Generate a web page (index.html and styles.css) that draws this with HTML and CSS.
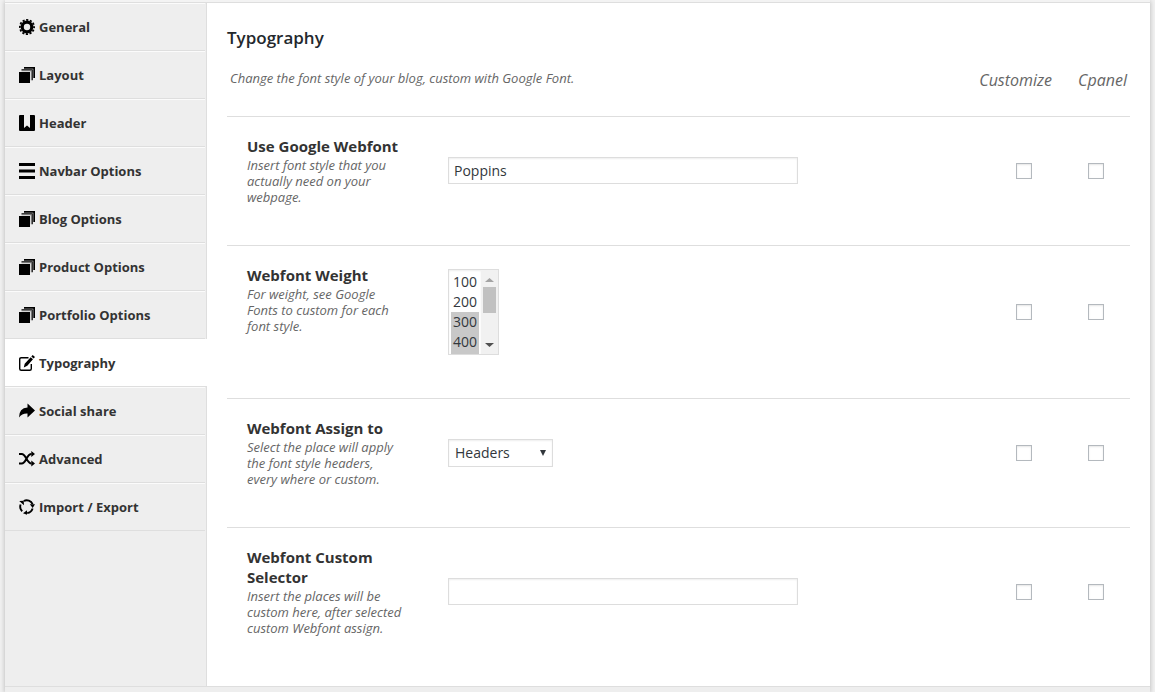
FILE: index.html
```
<!DOCTYPE html>
<html lang="en">
<head>
    <meta charset="UTF-8">
    <meta name="viewport" content="width=device-width, initial-scale=1.0">
    <title>Theme Options - Typography</title>
    <link rel="stylesheet" href="styles.css">
</head>
<body>

    <!-- Shared icon shapes -->
    <svg class="sprite" aria-hidden="true">
        <symbol id="icon-layers" viewBox="0 0 16 16">
            <path d="M5 0h11v11h-1.700V1.700H5z"/>
            <path d="M2.500 2.200h11.300v11h-1V3.300H2.500z"/>
            <path d="M2.500 3.300h10.300v10h-1V4.300H2.500z" opacity=".45"/>
            <path d="M0 5h11v11H0z"/>
        </symbol>
    </svg>

    <form class="panel" action="#">
        <div class="topbar"></div>

        <div class="container">
            <nav class="sidebar">
                <ul>
                    <li><a href="#general">
                        <svg class="icon" viewBox="0 0 16 16"><circle cx="8" cy="8" r="4.800" fill="none" stroke="#000" stroke-width="3.200"/><circle cx="8" cy="8" r="7.100" fill="none" stroke="#000" stroke-width="1.800" stroke-dasharray="2.200 1.518" stroke-dashoffset="1.100"/></svg>
                        General</a></li>
                    <li><a href="#layout"><svg class="icon"><use href="#icon-layers"/></svg> Layout</a></li>
                    <li><a href="#header">
                        <svg class="icon" viewBox="0 0 16 16"><path d="M1 0h4v13l3-2.500 3 2.500V0h4q1 0 1 1v14q0 1-1 1H1q-1 0-1-1V1q0-1 1-1z"/></svg>
                        Header</a></li>
                    <li><a href="#navbar">
                        <svg class="icon" viewBox="0 0 16 16"><path d="M0 0h16v3H0zM0 6.500h16v3H0zM0 13h16v3H0z"/></svg>
                        Navbar Options</a></li>
                    <li><a href="#blog"><svg class="icon"><use href="#icon-layers"/></svg> Blog Options</a></li>
                    <li><a href="#product"><svg class="icon"><use href="#icon-layers"/></svg> Product Options</a></li>
                    <li><a href="#portfolio"><svg class="icon"><use href="#icon-layers"/></svg> Portfolio Options</a></li>
                    <li class="active"><a href="#typography">
                        <svg class="icon" viewBox="0 0 16 16"><path d="M9.500 2.700H2.200Q.7 2.700.7 4.200v9.500q0 1.500 1.500 1.500h8.600q1.500 0 1.500-1.500V9" fill="none" stroke="#000" stroke-width="1.400"/><path d="M13.700 0 16 2l-1.400 1.600-2.300-2zM11.700 2.300l2.300 2-5.700 6.500-3.500 1.600.9-3.600z"/></svg>
                        Typography</a></li>
                    <li><a href="#social">
                        <svg class="icon" viewBox="0 0 16 16"><path d="M8.500.5 16 7.500l-7.500 7v-4Q3 10.200 0 14.500 0 5 8.500 4.500z"/></svg>
                        Social share</a></li>
                    <li><a href="#advanced">
                        <svg class="icon" viewBox="0 0 16 16"><path d="M0 3h2.700C7.200 3 7.500 12.500 12.500 12.500M0 12.500h2.700C7.200 12.500 7.500 3 12.500 3" fill="none" stroke="#000" stroke-width="2"/><path d="M12.300 0 16 3l-3.700 3zM12.300 9.500l3.700 3-3.700 3z"/></svg>
                        Advanced</a></li>
                    <li><a href="#import">
                        <svg class="icon" viewBox="0 0 16 16"><path d="M4.800 2A6.400 6.400 0 0 1 13.600 5.200M13.600 9.500A6.400 6.400 0 0 1 8.200 14M3.200 12.200A6.400 6.400 0 0 1 1.600 5.500" fill="none" stroke="#000" stroke-width="1.900"/><path d="M.2 2l4.500-.2.300 4.400zM10.800 5.200H16l-2.300 3.700zM8 11.200v4.600l-4-1.600z"/></svg>
                        Import / Export</a></li>
                </ul>
            </nav>

            <main class="main">
                <h1>Typography</h1>
                <div class="section-head">
                    <p class="section-desc">Change the font style of your blog, custom with Google Font.</p>
                    <span class="column-label">Customize</span>
                    <span class="column-label">Cpanel</span>
                </div>

                <div class="row">
                    <div class="field-info">
                        <label class="field-title" for="webfont">Use Google Webfont</label>
                        <p class="field-desc">Insert font style that you actually need on your webpage.</p>
                    </div>
                    <div class="field">
                        <input class="text" type="text" id="webfont" value="Poppins">
                    </div>
                    <div class="checks">
                        <input type="checkbox" aria-label="Use Google Webfont in Customize">
                        <input type="checkbox" aria-label="Use Google Webfont in Cpanel">
                    </div>
                </div>

                <div class="row">
                    <div class="field-info">
                        <label class="field-title" for="weight">Webfont Weight</label>
                        <p class="field-desc">For weight, see Google Fonts to custom for each font style.</p>
                    </div>
                    <div class="field">
                        <div class="listbox">
                            <select id="weight" multiple size="4">
                                <option>100</option>
                                <option>200</option>
                                <option selected>300</option>
                                <option selected>400</option>
                                <option selected>500</option>
                                <option>600</option>
                                <option>700</option>
                                <option>800</option>
                            </select>
                            <div class="scrollbar" aria-hidden="true">
                                <svg class="arrow" viewBox="0 0 17 17"><path d="M4 12l4.500-4 4.500 4z" fill="#a3a3a3"/></svg>
                                <div class="thumb"></div>
                                <svg class="arrow" viewBox="0 0 17 17"><path d="M4 6l4.500 4L13 6z" fill="#505050"/></svg>
                            </div>
                        </div>
                    </div>
                    <div class="checks">
                        <input type="checkbox" aria-label="Webfont Weight in Customize">
                        <input type="checkbox" aria-label="Webfont Weight in Cpanel">
                    </div>
                </div>

                <div class="row">
                    <div class="field-info">
                        <label class="field-title" for="assign">Webfont Assign to</label>
                        <p class="field-desc">Select the place will apply the font style headers, every where or custom.</p>
                    </div>
                    <div class="field">
                        <span class="dropdown">
                            <select id="assign">
                                <option>Headers</option>
                                <option>Every where</option>
                                <option>Custom</option>
                            </select>
                        </span>
                    </div>
                    <div class="checks">
                        <input type="checkbox" aria-label="Webfont Assign to in Customize">
                        <input type="checkbox" aria-label="Webfont Assign to in Cpanel">
                    </div>
                </div>

                <div class="row">
                    <div class="field-info">
                        <label class="field-title" for="selector">Webfont Custom Selector</label>
                        <p class="field-desc">Insert the places will be custom here, after selected custom Webfont assign.</p>
                    </div>
                    <div class="field">
                        <input class="text" type="text" id="selector">
                    </div>
                    <div class="checks">
                        <input type="checkbox" aria-label="Webfont Custom Selector in Customize">
                        <input type="checkbox" aria-label="Webfont Custom Selector in Cpanel">
                    </div>
                </div>
            </main>
        </div>

        <div class="bottombar"></div>
    </form>

</body>
</html>
```
FILE: styles.css
```
* {
    box-sizing: border-box;
}
body {
    margin: 0;
    background-color: #f1f1f1;
    color: #333;
    font-family: "Open Sans", sans-serif;
    font-size: 13px;
    line-height: 20px;
}
.sprite {
    display: none;
}
.panel {
    margin: 0 5px;
    box-shadow: 0 1px 5px rgba(0,0,0,0.25);
}
.topbar {
    height: 3px;
    background-color: #f3f3f3;
    border-bottom: 1px solid #dedede;
}
.bottombar {
    height: 6px;
    background-color: #eee;
    border-top: 1px solid #dedede;
}
.container {
    display: flex;
    background-color: #fff;
}

/* Sidebar */
.sidebar {
    width: 202px;
    flex-shrink: 0;
    background-color: #eee;
    border-right: 1px solid #dedede;
}
.sidebar ul {
    list-style: none;
    margin: 0;
    padding: 0;
}
.sidebar li {
    margin-right: 1px;
    border-top: 1px solid #fbfbfb;
    border-bottom: 1px solid #dedede;
}
.sidebar a {
    display: flex;
    align-items: center;
    gap: 4px;
    height: 46px;
    padding: 0 14px;
    color: #333;
    font-weight: 700;
    text-decoration: none;
}
.sidebar .active {
    margin-right: -1px; /* covers the sidebar border */
    background-color: #fff;
    border-top-color: #fff;
}
.icon {
    width: 16px;
    height: 16px;
    flex-shrink: 0;
}

/* Main column */
.main {
    flex: 1;
    min-width: 0;
    padding: 25px 20px 10px;
}
h1 {
    margin: 0;
    color: #23282d;
    font-size: 17px;
    font-weight: 600;
    line-height: 20px;
}
.section-head {
    display: flex;
    align-items: center;
    gap: 26px;
    height: 68px;
    padding: 0 3px 4px;
    color: #666;
    font-style: italic;
}
.section-desc {
    flex: 1;
    margin: 0 0 4px;
}
.column-label {
    font-size: 16px;
}
.row {
    display: grid;
    grid-template-columns: 201px 1fr auto;
    align-items: center;
    padding: 19px 26px 40px 20px;
    border-top: 1px solid #dedede;
}
.field-info {
    align-self: start;
    padding-right: 44px;
}
.field-title {
    display: block;
    margin-bottom: 1px;
    font-size: 15px;
    font-weight: 700;
}
.field-desc {
    margin: 0;
    color: #666;
    font-style: italic;
    line-height: 16px;
}
.checks {
    display: flex;
    gap: 56px;
}

/* Controls */
input, select {
    margin: 0;
    background-color: #fff;
    border: 1px solid #ddd;
    border-radius: 0;
    box-shadow: inset 0 1px 2px rgba(0,0,0,0.07);
    color: #32373c;
    font-family: inherit;
    font-size: 14px;
}
.text {
    display: block;
    width: 350px;
    max-width: 100%;
    height: 27px;
    padding: 3px 5px;
}
input[type="checkbox"] {
    appearance: none;
    width: 16px;
    height: 16px;
    border-color: #b4b9be;
    box-shadow: inset 0 1px 2px rgba(0,0,0,0.1);
}
.dropdown {
    position: relative;
    display: block;
    width: 105px;
}
.dropdown::after {
    content: "";
    position: absolute;
    top: 11px;
    right: 7px;
    border: 3px solid transparent;
    border-top: 6px solid #32373c;
    border-bottom: 0;
    pointer-events: none;
}
.dropdown select {
    appearance: none;
    display: block;
    width: 100%;
    height: 28px;
    padding: 2px 6px;
}
.listbox {
    display: flex;
    width: 51px;
    height: 86px;
    margin: 4px 0 3px;
    border: 1px solid #ddd;
}
.listbox select {
    flex: 1;
    min-width: 0;
    height: 84px;
    padding: 2px;
    border: 0;
    scrollbar-width: none;
}
.listbox option {
    min-height: 20px;
    padding: 0 2px;
    line-height: 20px;
}
.listbox option:checked {
    background: #c8c8c8 linear-gradient(#c8c8c8, #c8c8c8);
    color: #32373c;
}
.scrollbar {
    display: flex;
    flex-direction: column;
    width: 17px;
    background-color: #f1f1f1;
}
.arrow {
    width: 17px;
    height: 17px;
}
.arrow:last-child {
    margin-top: auto;
}
.thumb {
    height: 26px;
    margin: 0 2px;
    background-color: #c1c1c1;
}
```
